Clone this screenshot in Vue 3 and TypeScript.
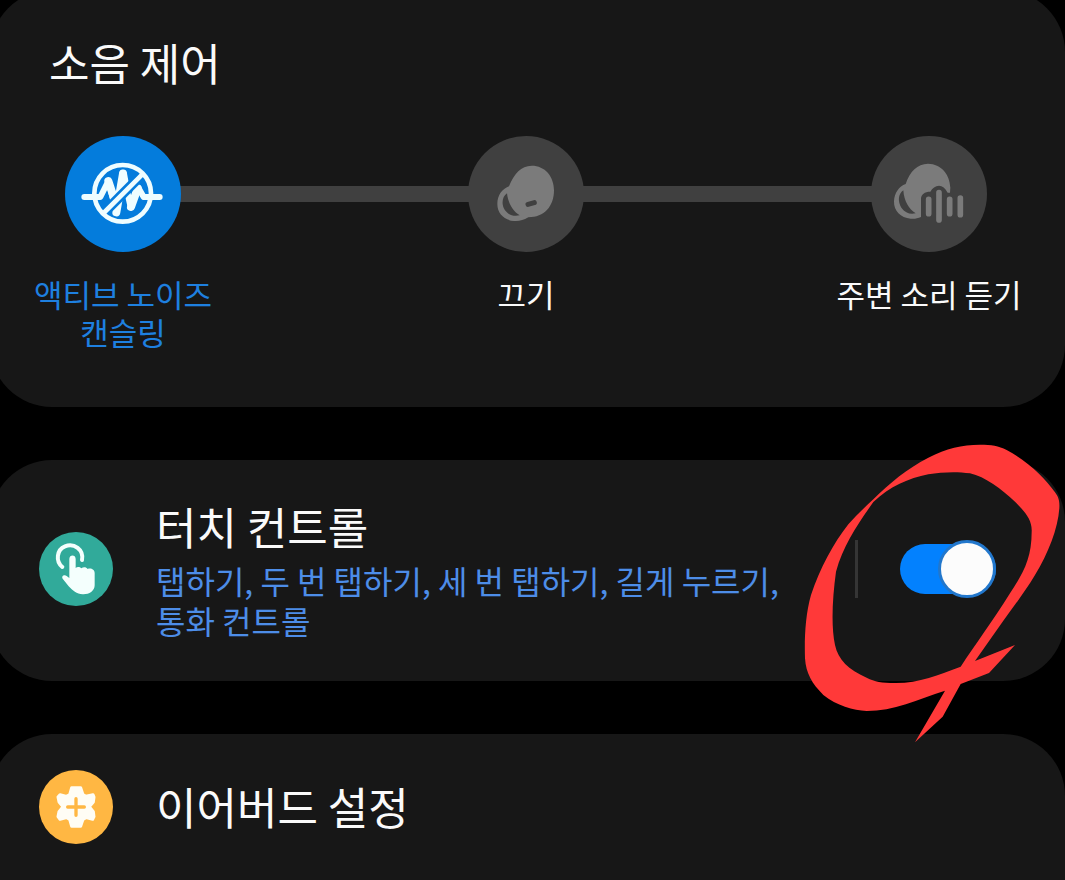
<script setup lang="ts">
import { ref } from 'vue'

type Mode = 'anc' | 'off' | 'ambient'

const modes: { id: Mode; label: string }[] = [
  { id: 'anc', label: '액티브 노이즈 캔슬링' },
  { id: 'off', label: '끄기' },
  { id: 'ambient', label: '주변 소리 듣기' },
]

const mode = ref<Mode>('anc')
const touchEnabled = ref(true)
</script>

<template>
  <main class="page">
    <section class="card noise" aria-labelledby="noise-title">
      <h2 id="noise-title" class="title">소음 제어</h2>
      <div class="modes" role="radiogroup" aria-labelledby="noise-title">
        <label v-for="m in modes" :key="m.id" class="mode" :class="{ active: mode === m.id }">
          <input v-model="mode" class="mode-input" type="radio" name="noise-mode" :value="m.id" />
          <span class="mode-dot">
            <svg v-if="m.id === 'anc'" viewBox="30 33 348 348" fill="none" stroke-linecap="round" stroke-linejoin="round" aria-hidden="true">
              <path d="M88 216H136L160 168L184 262L204 145L227 246L250 188L266 216H314" stroke="#effdff" stroke-width="18" />
              <path d="M160 168L178 222M204 146L184 262M204 146L212 190M228 246L248 190" stroke="#effdff" stroke-width="24" />
              <path d="M146 264L262 148" stroke="#047cdc" stroke-width="30" stroke-linecap="butt" />
              <path d="M146 264L262 148" stroke="#effdff" stroke-width="14" />
              <circle cx="203" cy="205" r="85" stroke="#effdff" stroke-width="14" />
            </svg>
            <svg v-else-if="m.id === 'off'" viewBox="31 33 348 348" aria-hidden="true">
              <path fill="#7b7b7b" d="M154 184C170 145 190 123 222 122C262 122 289 154 289 196C289 244 260 277 212 277C197 286 185 289 169 288C140 286 119 265 119 237C119 211 133 192 154 184Z" />
              <path fill="#404040" d="M148 205C134 214 130 237 141 254C152 270 168 275 186 271C164 257 151 233 148 205Z" />
              <path d="M211 238L230 233" fill="none" stroke="#404040" stroke-width="15" stroke-linecap="round" />
            </svg>
            <svg v-else viewBox="29 33 348 348" aria-hidden="true">
              <path fill="#7b7b7b" d="M133 177C146 138 168 117 200 116C240 117 265 147 267 188L266 203H259C252 189 243 182 233 182C222 182 213 189 207 200C190 200 179 208 179 222V276C168 281 159 282 148 281C118 279 97 258 98 229C99 204 113 184 133 177Z" />
              <path fill="#404040" d="M126 196C110 207 109 230 120 248C132 264 146 269 163 265C143 253 128 228 126 196Z" />
              <path d="M202 223V266M233 203V285M265 223V266M297 219V269" fill="none" stroke="#7b7b7b" stroke-width="17" stroke-linecap="round" />
            </svg>
          </span>
          <span class="mode-label">{{ m.label }}</span>
        </label>
      </div>
    </section>

    <section class="card row touch">
      <span class="badge teal">
        <svg viewBox="27 24 222 222" fill="none" stroke="#f4fffd" stroke-linecap="round" stroke-linejoin="round" aria-hidden="true">
          <path d="M97 129C76 111 80 77 105 67C132 56 162 77 156 108" stroke-width="12" />
          <path d="M118 105C118 91 137 91 137 105V132C141 127 150 128 154 133C160 128 169 129 173 135C181 131 194 135 194 147V184C194 202 176 212 158 211C140 210 128 200 116 187L98 164C93 155 104 150 110 156L118 162Z" fill="#f4fffd" stroke="none" />
        </svg>
      </span>
      <div class="text">
        <h2 id="touch-title" class="title">터치 컨트롤</h2>
        <p class="subtitle">탭하기, 두 번 탭하기, 세 번 탭하기, 길게 누르기, 통화 컨트롤</p>
      </div>
      <div class="switch-area">
        <input v-model="touchEnabled" class="switch" type="checkbox" role="switch" aria-labelledby="touch-title" />
      </div>
      <svg class="scribble" viewBox="0 0 810 945" aria-hidden="true">
        <path
          fill="#ff3939"
          fill-rule="evenodd"
          d="M235 193C285 143 335 102 400 68C455 40 500 29 555 29C590 29 610 32 635 45C700 80 750 130 780 172C792 188 794 200 793 220C789 280 760 355 720 420C690 470 655 516 625 557L540 678L600 654L660 630L582 714L497 747L443 845L360 922L450 767C370 793 295 828 215 828C175 826 125 812 85 780C50 745 33 715 30 670C28 610 31 540 48 480C75 400 115 325 160 268C185 240 210 216 235 193ZM235 201C285 154 340 130 400 118C440 111 485 109 525 115C570 125 620 163 660 200C690 230 712 255 710 290C710 370 685 414 645 475C595 555 540 630 497 695C430 720 370 745 300 744C260 744 240 740 215 728C160 704 130 675 120 630C108 575 112 490 123 410C145 330 190 265 235 201Z"
        />
      </svg>
    </section>

    <section class="card row settings">
      <span class="badge amber">
        <svg viewBox="27 24 222 222" fill="none" stroke-linejoin="round" aria-hidden="true">
          <path d="M125 77H152L159 98L168 103L189 98L192 105L190 120L178 134L190 149L192 164L188 172L168 167L159 172L152 193H125L119 172L110 167L90 172L84 164L87 149L99 134L87 120L84 105L90 98L110 103L119 98Z" fill="#fffdf5" stroke="#fffdf5" stroke-width="9" />
          <path d="M138 110V160M113 135H163" stroke="#ffb743" stroke-width="10" stroke-linecap="round" />
        </svg>
      </span>
      <h2 class="title">이어버드 설정</h2>
    </section>
  </main>
</template>

<style>
body {
  margin: 0;
  background: #000;
}
</style>

<style scoped>
.page {
  display: flex;
  flex-direction: column;
  gap: 53px;
  min-height: 100vh;
  box-sizing: border-box;
  overflow: hidden;
  background: #000;
  color: #fafafa;
  font-family: "Noto Sans CJK KR", "Noto Sans", sans-serif;
}

.card {
  box-sizing: border-box;
  margin-left: -10px;
  border-radius: 62px;
  background: #171717;
}

.noise {
  margin-top: -10px;
  padding: 44px 36px 56px 33px;
}

.title {
  margin: 0;
  font-size: 44px;
  line-height: 56px;
  font-weight: 400;
}

.noise .title {
  padding-left: 26px;
}

.modes {
  position: relative;
  display: flex;
  justify-content: space-between;
  margin-top: 46px;
}

.modes::before {
  content: "";
  position: absolute;
  top: 50px;
  left: 100px;
  right: 100px;
  height: 16px;
  background: #404040;
}

.mode {
  position: relative;
  display: flex;
  flex-direction: column;
  align-items: center;
  gap: 23px;
  width: 200px;
  cursor: pointer;
}

.mode-input {
  position: absolute;
  opacity: 0;
}

.mode-dot {
  width: 116px;
  height: 116px;
  border-radius: 50%;
  background: #404040;
}

.active .mode-dot {
  background: #047cdc;
}

.mode-dot svg,
.badge svg {
  display: block;
  width: 100%;
  height: 100%;
}

.mode-label {
  font-size: 31px;
  line-height: 38px;
  text-align: center;
  word-break: keep-all;
}

.active .mode-label {
  color: #1e80e0;
}

.row {
  position: relative;
  display: flex;
  padding-left: 49px;
}

.touch {
  z-index: 1;
  align-items: center;
  padding-top: 38px;
  padding-bottom: 41px;
}

.badge {
  flex: none;
  width: 74px;
  height: 74px;
  margin-right: 43px;
  border-radius: 50%;
}

.teal {
  background: #31aa9a;
}

.amber {
  background: #ffb743;
}

.text {
  flex: 1;
}

.subtitle {
  margin: 6px 0 0;
  color: #4d8de8;
  font-size: 32px;
  line-height: 40px;
  word-break: keep-all;
}

.switch-area {
  flex: none;
  display: flex;
  align-items: center;
  height: 58px;
  margin-left: 60px;
  padding-left: 42px;
  padding-right: 69px;
  border-left: 3px solid #353535;
}

.switch {
  appearance: none;
  position: relative;
  width: 96px;
  height: 50px;
  margin: 0;
  border-radius: 25px;
  background: #555;
  cursor: pointer;
}

.switch::before {
  content: "";
  position: absolute;
  top: -4px;
  left: 0;
  box-sizing: border-box;
  width: 58px;
  height: 58px;
  border: 3px solid #777;
  border-radius: 50%;
  background: #fcfcfc;
}

.switch:checked {
  background: #0381fe;
}

.switch:checked::before {
  left: auto;
  right: 0;
  border-color: #2277cc;
}

.scribble {
  position: absolute;
  top: -25px;
  right: 0;
  width: 270px;
  height: 315px;
  pointer-events: none;
}

.settings {
  flex: 1;
  align-items: flex-start;
  padding-top: 36px;
  padding-bottom: 36px;
  border-bottom-left-radius: 0;
  border-bottom-right-radius: 0;
}

.settings .title {
  line-height: 72px;
}
</style>
